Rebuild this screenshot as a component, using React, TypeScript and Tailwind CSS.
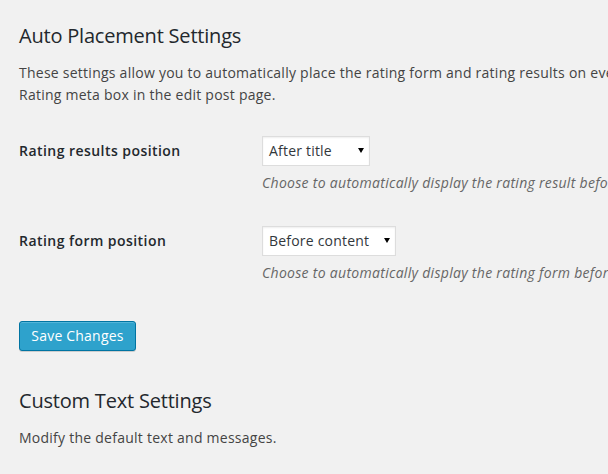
import React from "react";

function FakeSelect({ value, width }: { value: string; width: string }) {
  return (
    <div
      className={`${width} h-[30px] bg-white border border-[#dddddd] shadow-[inset_0_1px_2px_rgba(0,0,0,0.07)] flex items-center justify-between pl-[6px] pr-[4px] text-[14px] tracking-[0.2px] text-[#32373c]`}
    >
      <span className="leading-[28px]">{value}</span>
      <svg width="8" height="8" viewBox="0 0 8 8" className="mb-[2px]">
        <polygon points="1,2 7,2 4,7" fill="#000" />
      </svg>
    </div>
  );
}

export default function App() {
  return (
    <div
      className="w-[608px] h-[474px] overflow-hidden bg-[#f1f1f1] pl-[19px] pt-[22px] text-[#444444]"
      style={{ fontFamily: '"Open Sans", "Noto Sans", sans-serif' }}
    >
      <h2 className="text-[20px] leading-[28px] tracking-[-0.2px] font-normal text-[#23282d] whitespace-nowrap">
        Auto Placement Settings
      </h2>
      <p className="mt-[12px] text-[14px] leading-[22px] tracking-[0.25px] whitespace-nowrap">
        These settings allow you to automatically place the rating form and rating results on every post or page in default. You can override this in the Multi
        <br />
        Rating meta box in the edit post page.
      </p>

      <div className="mt-[30px] flex items-start">
        <div className="w-[243px] shrink-0 text-[14px] leading-[30px] font-semibold tracking-[0.45px] text-[#23282d] whitespace-nowrap">
          Rating results position
        </div>
        <div className="flex flex-col">
          <FakeSelect value="After title" width="w-[108px]" />
          <p className="mt-[6px] text-[14px] leading-[22px] tracking-[0.3px] italic text-[#666666] whitespace-nowrap">
            Choose to automatically display the rating result before or after the post title in default.
          </p>
        </div>
      </div>

      <div className="mt-[32px] flex items-start">
        <div className="w-[243px] shrink-0 text-[14px] leading-[30px] font-semibold tracking-[0.45px] text-[#23282d] whitespace-nowrap">
          Rating form position
        </div>
        <div className="flex flex-col">
          <FakeSelect value="Before content" width="w-[134px]" />
          <p className="mt-[6px] text-[14px] leading-[22px] tracking-[0.3px] italic text-[#666666] whitespace-nowrap">
            Choose to automatically display the rating form before or after the post content in default.
          </p>
        </div>
      </div>

      <button className="mt-[37px] w-[117px] h-[30px] rounded-[3px] bg-[#2ea2cc] border border-[#0074a2] shadow-[inset_0_1px_0_rgba(120,200,230,0.5),0_1px_0_rgba(0,0,0,0.15)] text-white text-[14px] leading-[28px] tracking-[0.2px] flex items-center justify-center">
        Save Changes
      </button>

      <h2 className="mt-[36px] text-[20px] leading-[28px] tracking-[-0.2px] font-normal text-[#23282d] whitespace-nowrap">
        Custom Text Settings
      </h2>
      <p className="mt-[12px] text-[14px] leading-[22px] tracking-[0.25px]">
        Modify the default text and messages.
      </p>
    </div>
  );
}
